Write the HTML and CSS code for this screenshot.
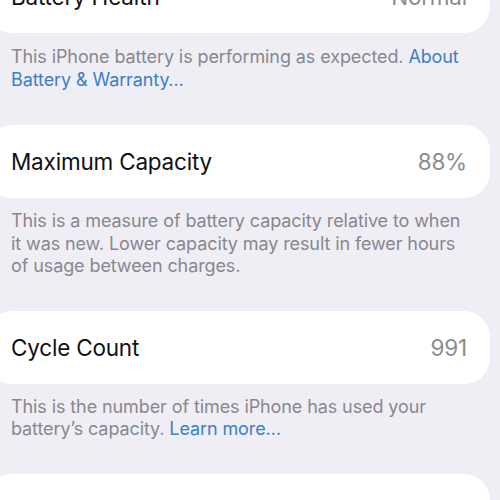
FILE: index.html
```html
<!DOCTYPE html>
<html>
<head>
<meta charset="utf-8">
<link rel="stylesheet" href="styles.css">
</head>
<body>
<div class="page">
  <div class="card card-first">
    <span class="label">Battery Health</span>
    <span class="value">Normal</span>
  </div>
  <p class="footer footer-first">This iPhone battery is performing as expected. <a class="link">About Battery &amp; Warranty…</a></p>

  <div class="card">
    <span class="label">Maximum Capacity</span>
    <span class="value">88%</span>
  </div>
  <p class="footer">This is a measure of battery capacity relative to when it was new. Lower capacity may result in fewer hours of usage between charges.</p>

  <div class="card">
    <span class="label">Cycle Count</span>
    <span class="value">991</span>
  </div>
  <p class="footer">This is the number of times iPhone has used your battery’s capacity. <a class="link">Learn more…</a></p>

  <div class="card">
    <span class="label">Optimized Battery Charging</span>
    <span class="value"></span>
  </div>
</div>
</body>
</html>
```
FILE: styles.css
```css
html, body {
  margin: 0;
  padding: 0;
  background: #efeef4;
  overflow: hidden;
}
.page {
  width: 500px;
  height: 500px;
  overflow: hidden;
  font-family: Inter, "Noto Sans", sans-serif;
}
.card {
  box-sizing: border-box;
  height: 73px;
  margin-left: -14px;
  width: 504px;
  background: #ffffff;
  border-radius: 26px;
  display: flex;
  align-items: center;
  justify-content: space-between;
  padding: 0 23px 0 25px;
}
.card-first {
  margin-top: -40px;
}
.label {
  font-size: 22.5px;
  color: #111113;
  letter-spacing: -0.2px;
}
.value {
  font-size: 22.5px;
  color: #8b8b90;
  letter-spacing: -0.2px;
}
.footer {
  margin: 0;
  padding: 12px 38px 33px 11px;
  font-size: 18px;
  line-height: 22.5px;
  color: #88878f;
  letter-spacing: -0.1px;
}
.footer-first {
  padding-top: 13px;
  padding-bottom: 34px;
}
.link {
  color: #3d7fc6;
}
```
